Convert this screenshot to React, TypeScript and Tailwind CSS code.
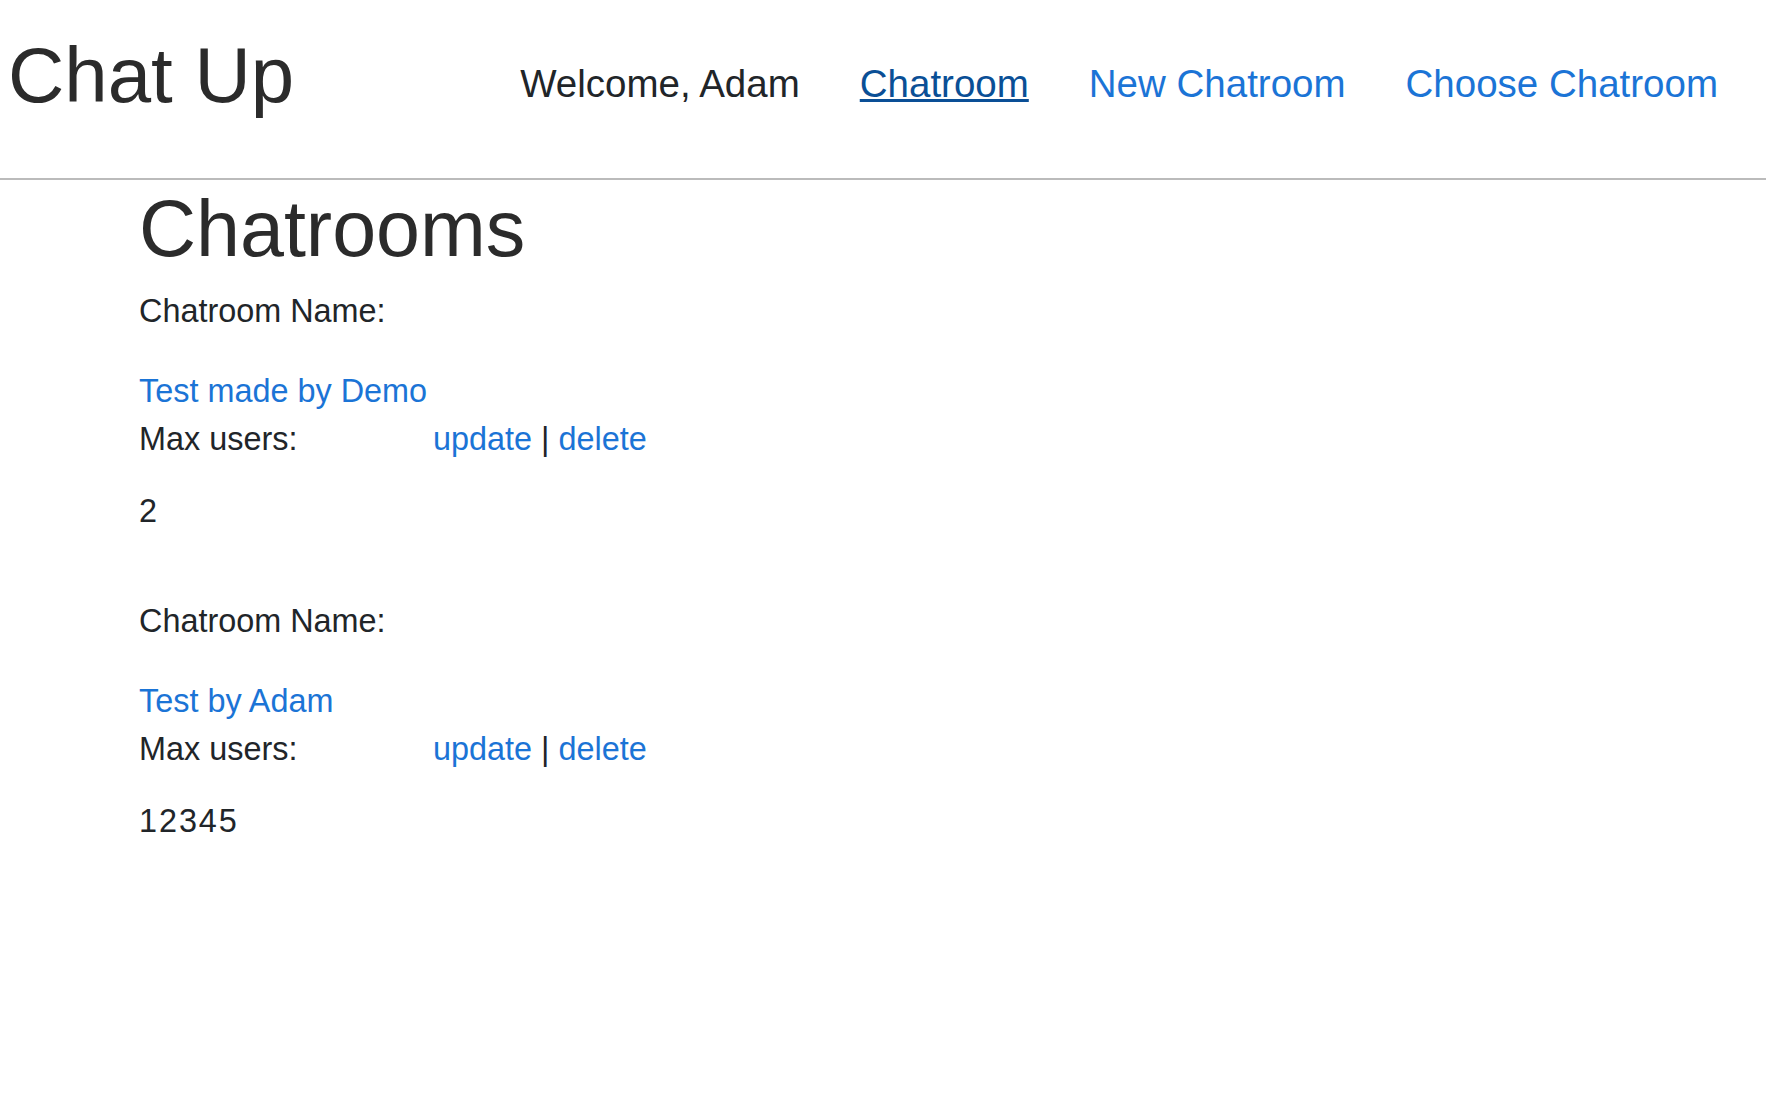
import React from "react";

const rooms = [
  { name: "Test made by Demo", maxUsers: "2" },
  { name: "Test by Adam", maxUsers: "12345" },
];

function RoomEntry({ name, maxUsers }: { name: string; maxUsers: string }) {
  return (
    <div className="mb-[62px]">
      <p className="leading-[48px] mb-[32px]">Chatroom Name:</p>
      <a href="#" className="block leading-[48px] text-[#1b74d6]">
        {name}
      </a>
      <div className="flex leading-[48px]">
        <p className="w-[294px]">Max users:</p>
        <div>
          <a href="#" className="text-[#1b74d6]">update</a>
          {" | "}
          <a href="#" className="text-[#1b74d6]">delete</a>
        </div>
      </div>
      <p className="leading-[48px] mt-[24px] font-medium tracking-[0.06em]">{maxUsers}</p>
    </div>
  );
}

export default function App() {
  return (
    <div className="min-h-[1100px] bg-white text-[#212529] font-['Liberation_Sans',Arial,sans-serif]">
      <header className="flex items-start h-[180px] border-b-2 border-[#bbbbbb] pl-[8px] pr-[48px]">
        <h1 className="mt-[29px] text-[78px] leading-[1.2] text-[#2b2b2b]">Chat Up</h1>
        <nav className="ml-auto mt-[55px] flex gap-[60px] text-[38.5px] leading-[1.5]">
          <span>Welcome, Adam</span>
          <a href="#" className="underline text-[#0a4f96]">Chatroom</a>
          <a href="#" className="text-[#1b74d6]">New Chatroom</a>
          <a href="#" className="text-[#1b74d6]">Choose Chatroom</a>
        </nav>
      </header>
      <main className="pl-[139px] text-[32.4px]">
        <h1 className="mt-[2px] mb-[10px] text-[79px] leading-[1.2] text-[#2b2b2b]">Chatrooms</h1>
        {rooms.map((r) => (
          <RoomEntry key={r.name} name={r.name} maxUsers={r.maxUsers} />
        ))}
      </main>
    </div>
  );
}
